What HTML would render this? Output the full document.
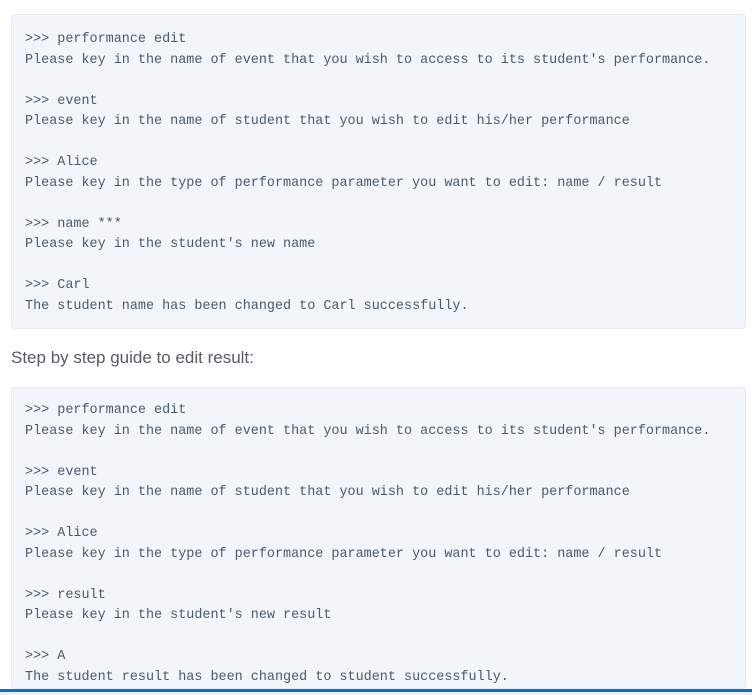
<!DOCTYPE html>
<html style="margin:0;overflow:hidden;width:752px;height:695px;"><head><style>
body{margin:0;background:#fff;width:752px;height:695px;overflow:hidden;position:relative;}
.box{position:absolute;left:11px;width:735px;background:#f2f5fa;border:1px solid #e6ebf1;border-radius:4px;box-sizing:border-box;padding:0 13px;overflow:hidden;}
pre{margin:0;font-family:"Liberation Mono",monospace;font-size:13.45px;line-height:20.5px;color:#4a5b6b;white-space:pre;}
.h{position:absolute;left:11px;top:348px;font-family:"Liberation Sans",sans-serif;font-size:17px;color:#555b61;}
.bar{position:absolute;left:0;top:689px;width:752px;height:3px;background:#0b6fd0;}
.below{position:absolute;left:0;top:692px;width:752px;height:3px;background:#eef1f4;}
</style></head><body>
<div class="box" style="top:14px;height:315px;padding-top:15px;"><pre>&gt;&gt;&gt; performance edit
Please key in the name of event that you wish to access to its student's performance.

&gt;&gt;&gt; event
Please key in the name of student that you wish to edit his/her performance

&gt;&gt;&gt; Alice
Please key in the type of performance parameter you want to edit: name / result

&gt;&gt;&gt; name ***
Please key in the student's new name

&gt;&gt;&gt; Carl
The student name has been changed to Carl successfully.</pre></div>
<div class="h">Step by step guide to edit result:</div>
<div class="box" style="top:387px;height:302px;padding-top:13px;"><pre>&gt;&gt;&gt; performance edit
Please key in the name of event that you wish to access to its student's performance.

&gt;&gt;&gt; event
Please key in the name of student that you wish to edit his/her performance

&gt;&gt;&gt; Alice
Please key in the type of performance parameter you want to edit: name / result

&gt;&gt;&gt; result
Please key in the student's new result

&gt;&gt;&gt; A
The student result has been changed to student successfully.</pre></div>
<div class="bar"></div><div class="below"></div>
</body></html>
